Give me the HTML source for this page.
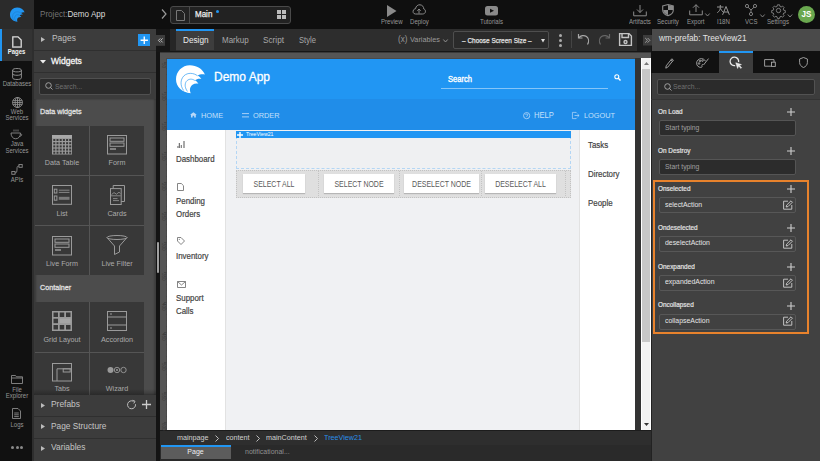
<!DOCTYPE html>
<html><head><meta charset="utf-8">
<style>
*{box-sizing:border-box;margin:0;padding:0}
html,body{width:820px;height:461px;overflow:hidden;background:#141414;font-family:"Liberation Sans",sans-serif}
.a{position:absolute}
.t{position:absolute;white-space:nowrap;line-height:1}
svg{position:absolute;overflow:visible}
</style></head><body>
<!-- TOP BAR -->
<div class="a" style="left:0;top:0;width:820px;height:29px;background:#0f0f0f"></div>
<div class="a" style="left:0;top:0;width:34px;height:29px;background:#2b2b2b"></div>
<div class="t" style="left:40px;top:10.3px;font-size:8.91px;color:#747474;transform:scaleX(0.91);transform-origin:0 0">Project:<span style="color:#dadada">Demo App</span></div>


<!-- TOPBAR CONTENT -->
<svg style="left:9.5px;top:7.3px" width="15" height="15" viewBox="0 0 100 100"><path fill="#2196f3" d="M 98 36 C 90 16 70 4 47 4 C 21 4 0 25 0 52 C 0 77 20 97 50 99 C 45 88 47 76 56 70 C 62 66 70 65 76 67 C 72 60 68 57 64 56 C 70 51 78 49 86 51 C 82 44 77 41 73 40 C 80 35 90 34 98 36 Z"/><path fill="none" stroke="#1d75c0" stroke-width="3" d="M 73 40 C 60 30 40 28 27 40 C 14 53 14 74 26 90 M 64 56 C 54 49 42 50 35 59 C 28 69 31 83 39 93"/></svg>
<svg style="left:161px;top:9px" width="6" height="10" viewBox="0 0 6 10"><path d="M1 0.5 L5 5 L1 9.5" fill="none" stroke="#9a9a9a" stroke-width="1.2"/></svg>
<div class="a" style="left:170px;top:6px;width:121px;height:18px;border:1px solid #4a4a4a;border-radius:3px;background:#222"></div>
<div class="a" style="left:189px;top:7px;width:1px;height:16px;background:#4a4a4a"></div>
<svg style="left:176px;top:10px" width="9" height="11" viewBox="0 0 9 11"><path d="M0.5 0.5 H5.5 L8.5 3.5 V10.5 H0.5 Z" fill="none" stroke="#777" stroke-width="1"/></svg>
<div class="t" style="left:195px;top:10.32px;font-size:8.80px;-webkit-text-stroke:0.25px #eee;color:#eee;transform:scaleX(0.91);transform-origin:0 0">Main</div>
<div class="a" style="left:216px;top:10px;width:3px;height:3px;border-radius:50%;background:#2196f3"></div>
<div class="a" style="left:277px;top:10px;width:4px;height:4px;background:#bbb"></div>
<div class="a" style="left:282px;top:10px;width:4px;height:4px;background:#bbb"></div>
<div class="a" style="left:277px;top:15px;width:4px;height:4px;background:#bbb"></div>
<div class="a" style="left:282px;top:15px;width:4px;height:4px;background:#bbb"></div>

<svg style="left:387px;top:5px" width="10" height="12" viewBox="0 0 10 12"><path d="M0 0 L9.5 6 L0 12 Z" fill="#8a8a8a"/></svg>
<div class="t" style="left:380.8px;top:18.9px;font-size:6.9px;color:#979797;transform:scaleX(0.88);transform-origin:0 0">Preview</div>
<svg style="left:412px;top:4px" width="14" height="11" viewBox="0 0 14 11"><path d="M3.5 10 C1 10 0.6 7.5 1.5 6 C2 5 3 4.8 3.5 4.8 C3.8 2 6 0.6 8 0.8 C10.5 1 11.8 3 11.8 5 C13 5.3 13.6 6.5 13.4 7.8 C13.2 9.2 12 10 10.5 10 Z M7 9.5 V5 M5.3 6.7 L7 5 L8.7 6.7" fill="none" stroke="#8a8a8a" stroke-width="1"/></svg>
<div class="t" style="left:409.8px;top:18.9px;font-size:6.9px;color:#979797;transform:scaleX(0.88);transform-origin:0 0">Deploy</div>
<svg style="left:485px;top:6px" width="13" height="10" viewBox="0 0 13 10"><rect x="0" y="0" width="13" height="9.5" rx="2.5" fill="#8a8a8a"/><path d="M5 2.8 L9 4.8 L5 6.8 Z" fill="#0f0f0f"/></svg>
<div class="t" style="left:480px;top:18.9px;font-size:6.9px;color:#979797;transform:scaleX(0.88);transform-origin:0 0">Tutorials</div>

<svg style="left:633px;top:5px" width="14" height="12" viewBox="0 0 14 12"><path d="M7 0 V7.5 M4 4.5 L7 7.5 L10 4.5 M0.7 6.5 V10.8 H13.3 V6.5" fill="none" stroke="#8a8a8a" stroke-width="1"/></svg>
<div class="t" style="left:629px;top:18.9px;font-size:6.9px;color:#979797;transform:scaleX(0.88);transform-origin:0 0">Artifacts</div>
<svg style="left:662px;top:4px" width="12" height="12" viewBox="0 0 12 12"><path d="M6 0.5 L11.3 2 V6 C11.3 8.8 9 10.8 6 11.6 C3 10.8 0.7 8.8 0.7 6 V2 Z" fill="none" stroke="#8a8a8a" stroke-width="1.1"/><path d="M6 1 V6 H11 V2 Z M6 6 V11 C3.5 10.3 1.2 8.5 1.2 6 Z" fill="#8a8a8a"/></svg>
<div class="t" style="left:657.2px;top:18.9px;font-size:6.9px;color:#979797;transform:scaleX(0.88);transform-origin:0 0">Security</div>
<svg style="left:689px;top:4px" width="14" height="12" viewBox="0 0 14 12"><path d="M7 8 V0.7 M4 3.7 L7 0.7 L10 3.7 M0.7 6.5 V10.8 H13.3 V6.5" fill="none" stroke="#8a8a8a" stroke-width="1"/></svg>
<svg style="left:705px;top:13px" width="5" height="4" viewBox="0 0 5 4"><path d="M0.3 0.5 L2.5 3 L4.7 0.5" fill="none" stroke="#8a8a8a" stroke-width="0.9"/></svg>
<div class="t" style="left:687px;top:18.9px;font-size:6.9px;color:#979797;transform:scaleX(0.88);transform-origin:0 0">Export</div>
<svg style="left:716px;top:4px" width="14" height="11" viewBox="0 0 14 11" fill="none" stroke="#979797" stroke-width="1"><path d="M1 3 H7.5 M4.3 1 V3.5 C4.3 6 3 7.5 1.3 8.7 M4.5 4.5 C5 6 6 7.2 7 7.8"/><path d="M6.6 10.8 L10 2.5 L13.4 10.8 M7.8 8 H12.2"/></svg>
<div class="t" style="left:717px;top:18.9px;font-size:6.9px;color:#979797;transform:scaleX(0.88);transform-origin:0 0">I18N</div>
<svg style="left:745px;top:4px" width="12" height="12" viewBox="0 0 12 12"><circle cx="2" cy="2" r="1.6" fill="none" stroke="#8a8a8a" stroke-width="0.9"/><circle cx="10" cy="2" r="1.6" fill="none" stroke="#8a8a8a" stroke-width="0.9"/><circle cx="6" cy="10" r="1.6" fill="none" stroke="#8a8a8a" stroke-width="0.9"/><path d="M3 3.2 L6 6 L9 3.2 M6 6 V8.4" fill="none" stroke="#8a8a8a" stroke-width="0.9"/></svg>
<svg style="left:760px;top:14px" width="5" height="4" viewBox="0 0 5 4"><path d="M0.3 0.5 L2.5 3 L4.7 0.5" fill="none" stroke="#8a8a8a" stroke-width="0.9"/></svg>
<div class="t" style="left:745.4px;top:18.9px;font-size:6.9px;color:#979797;transform:scaleX(0.88);transform-origin:0 0">VCS</div>
<svg style="left:772px;top:4px" width="13" height="13" viewBox="0 0 24 24"><path fill="none" stroke="#8a8a8a" stroke-width="1.6" d="M10 1.5 h4 l0.6 3 l2.3 1 l2.6 -1.7 l2.8 2.8 l-1.7 2.6 l1 2.3 l3 0.6 v4 l-3 0.6 l-1 2.3 l1.7 2.6 l-2.8 2.8 l-2.6 -1.7 l-2.3 1 l-0.6 3 h-4 l-0.6 -3 l-2.3 -1 l-2.6 1.7 l-2.8 -2.8 l1.7 -2.6 l-1 -2.3 l-3 -0.6 v-4 l3 -0.6 l1 -2.3 l-1.7 -2.6 l2.8 -2.8 l2.6 1.7 l2.3 -1 Z"/><circle cx="12" cy="12" r="4" fill="none" stroke="#8a8a8a" stroke-width="1.6"/></svg>
<svg style="left:787px;top:14px" width="6" height="4" viewBox="0 0 5 4"><path d="M0.3 0.5 L2.5 3 L4.7 0.5" fill="none" stroke="#8a8a8a" stroke-width="0.9"/></svg>
<div class="t" style="left:767.3px;top:18.9px;font-size:6.9px;color:#979797;transform:scaleX(0.88);transform-origin:0 0">Settings</div>
<div class="a" style="left:798px;top:6px;width:17px;height:17px;border-radius:50%;background:#6aa84f"></div>
<div class="t" style="left:798px;top:9.82px;width:17px;text-align:center;font-size:8.80px;font-weight:bold;color:#fff;transform:scaleX(0.91);transform-origin:50% 0">JS</div>

<!-- LEFT NAV -->
<div class="a" style="left:0;top:29px;width:34px;height:432px;background:#111"></div>
<div class="a" style="left:0;top:29px;width:34px;height:32px;background:#333"></div>
<div class="a" style="left:0;top:29px;width:2px;height:32px;background:#2196f3"></div>


<!-- LEFT NAV CONTENT -->
<div class="a" style="left:32px;top:29px;width:2px;height:432px;background:#2e2e2e"></div>
<svg style="left:12px;top:36px" width="10" height="12" viewBox="0 0 10 12"><path d="M0.8 0.8 H6 L9.2 4 V11.2 H0.8 Z" fill="none" stroke="#ddd" stroke-width="1.3"/><path d="M1.5 11 H8.5" stroke="#aaa" stroke-width="1.5"/></svg>
<div class="t" style="left:0;top:49px;width:33px;text-align:center;font-size:6.60px;font-weight:bold;color:#f4f4f4;transform:scaleX(0.91);transform-origin:50% 0">Pages</div>
<svg style="left:12px;top:67.5px" width="10" height="12" viewBox="0 0 10 12" fill="none" stroke="#979797" stroke-width="0.9"><path d="M0.6 2.2 C0.6 1 2.6 0.5 5 0.5 C7.4 0.5 9.4 1 9.4 2.2 V9.8 C9.4 11 7.4 11.5 5 11.5 C2.6 11.5 0.6 11 0.6 9.8 Z M0.6 2.2 C0.6 3.4 2.6 3.9 5 3.9 C7.4 3.9 9.4 3.4 9.4 2.2 M0.6 5.6 C0.6 6.8 2.6 7.3 5 7.3 C7.4 7.3 9.4 6.8 9.4 5.6"/></svg>
<div class="t" style="left:0;top:81px;width:34px;text-align:center;font-size:6.60px;color:#979797;transform:scaleX(0.91);transform-origin:50% 0">Databases</div>
<svg style="left:11.5px;top:97px" width="11" height="11" viewBox="0 0 11 11" fill="none" stroke="#979797" stroke-width="0.8"><circle cx="5.5" cy="5.5" r="5"/><ellipse cx="5.5" cy="5.5" rx="2.4" ry="5"/><path d="M0.8 3.6 H10.2 M0.5 5.5 H10.5 M0.8 7.4 H10.2 M5.5 0.5 V10.5"/></svg>
<div class="t" style="left:0;top:109px;width:34px;text-align:center;font-size:6.60px;color:#979797;line-height:6.4px;transform:scaleX(0.91);transform-origin:50% 0">Web<br>Services</div>
<svg style="left:10px;top:129px" width="13" height="11" viewBox="0 0 13 11"><path d="M4 0.5 V2.5 M6 0.5 V2.5 M8 0.5 V2.5" stroke="#8a8a8a" stroke-width="0.8"/><path d="M1 4 H10.5 C10.5 7.5 8.5 9.8 5.7 9.8 C3 9.8 1 7.5 1 4 Z M10.5 5 C12 5 12.5 6.5 10 7.3" fill="none" stroke="#8a8a8a" stroke-width="0.9"/></svg>
<div class="t" style="left:0;top:141.3px;width:34px;text-align:center;font-size:6.60px;color:#979797;line-height:6.2px;transform:scaleX(0.91);transform-origin:50% 0">Java<br>Services</div>
<svg style="left:11px;top:164px" width="12" height="11" viewBox="0 0 12 11"><rect x="8" y="0.5" width="3.2" height="2.8" fill="none" stroke="#8a8a8a" stroke-width="0.9"/><rect x="0.8" y="7.5" width="3.2" height="2.8" fill="none" stroke="#8a8a8a" stroke-width="0.9"/><path d="M8 2 C6 2 6 3 6 5 C6 8 5.5 9 4 9" fill="none" stroke="#8a8a8a" stroke-width="0.9"/></svg>
<div class="t" style="left:0;top:176.5px;width:34px;text-align:center;font-size:6.60px;color:#979797;transform:scaleX(0.91);transform-origin:50% 0">APIs</div>
<svg style="left:11px;top:375px" width="12" height="9" viewBox="0 0 12 9"><path d="M0.5 0.5 H4.5 L5.5 1.8 H11.5 V8.5 H0.5 Z M0.5 3 H11.5" fill="none" stroke="#8a8a8a" stroke-width="0.9"/></svg>
<div class="t" style="left:0;top:387px;width:34px;text-align:center;font-size:6.60px;color:#979797;line-height:6px;transform:scaleX(0.91);transform-origin:50% 0">File<br>Explorer</div>
<svg style="left:12px;top:408px" width="9" height="11" viewBox="0 0 9 11"><path d="M0.5 0.5 H6 L8.5 3 V10.5 H0.5 Z M2.2 5 H6.8 M2.2 6.8 H6.8 M2.2 8.6 H6.8" fill="none" stroke="#8a8a8a" stroke-width="0.9"/></svg>
<div class="t" style="left:0;top:422px;width:34px;text-align:center;font-size:6.60px;color:#979797;transform:scaleX(0.91);transform-origin:50% 0">Logs</div>
<div class="a" style="left:11px;top:446px;width:3px;height:3px;border-radius:50%;background:#8a8a8a"></div>
<div class="a" style="left:15.5px;top:446px;width:3px;height:3px;border-radius:50%;background:#8a8a8a"></div>
<div class="a" style="left:20px;top:446px;width:3px;height:3px;border-radius:50%;background:#8a8a8a"></div>

<!-- LEFT PANEL -->
<div class="a" style="left:34px;top:29px;width:122px;height:432px;background:#3c3c3c"></div>
<div class="a" style="left:34px;top:99px;width:122px;height:296px;background:#4c4c4c;box-shadow:inset 2px 0 2px rgba(0,0,0,0.25), inset -2px 0 2px rgba(0,0,0,0.2)"></div>
<div class="a" style="left:156px;top:29px;width:4px;height:432px;background:#141414"></div>


<!-- LEFT PANEL CONTENT -->
<div class="a" style="left:34px;top:50px;width:122px;height:1px;background:#2f2f2f"></div>
<div class="a" style="left:34px;top:72px;width:122px;height:1px;background:#2f2f2f"></div>
<svg style="left:41px;top:37px" width="4" height="5" viewBox="0 0 4 5"><path d="M0 0 L4 2.5 L0 5 Z" fill="#bbb"/></svg>
<div class="t" style="left:51.5px;top:34.29px;font-size:9.24px;color:#c0c0c0;transform:scaleX(0.91);transform-origin:0 0">Pages</div>
<div class="a" style="left:137.5px;top:33.5px;width:12.5px;height:12.5px;background:#2196f3"></div>
<svg style="left:137.5px;top:33.5px" width="12.5" height="12.5" viewBox="0 0 12 12"><path d="M6 2.5 V9.5 M2.5 6 H9.5" stroke="#fff" stroke-width="1.3"/></svg>

<svg style="left:40px;top:59.5px" width="6" height="4" viewBox="0 0 6 4"><path d="M0 0 H6 L3 3.5 Z" fill="#eee"/></svg>
<div class="t" style="left:51.3px;top:56.3px;font-size:9.5px;color:#f4f4f4;-webkit-text-stroke:0.35px #f4f4f4;transform:scaleX(0.9);transform-origin:0 0">Widgets</div>
<div class="a" style="left:39px;top:78px;width:112px;height:16.5px;background:#2b2b2b;border:1px solid #505050;border-radius:2px"></div>
<svg style="left:45px;top:82px" width="8" height="8" viewBox="0 0 8 8"><circle cx="3.5" cy="3.5" r="2.8" fill="none" stroke="#aaa" stroke-width="0.9"/><path d="M5.5 5.5 L7.5 7.5" stroke="#aaa" stroke-width="0.9"/></svg>
<div class="t" style="left:54.5px;top:83.42px;font-size:7.48px;color:#707070;transform:scaleX(0.91);transform-origin:0 0">Search...</div>
<div class="t" style="left:40.3px;top:107.6px;font-size:8px;color:#e0e0e0;-webkit-text-stroke:0.3px #e0e0e0;transform:scaleX(0.9);transform-origin:0 0">Data widgets</div>
<div class="t" style="left:40.3px;top:283.6px;font-size:8px;color:#e0e0e0;-webkit-text-stroke:0.3px #e0e0e0;transform:scaleX(0.9);transform-origin:0 0">Container</div>

<div class="a" style="left:35px;top:126px;width:54px;height:49px;background:#383838"></div>
<div class="a" style="left:90px;top:126px;width:54px;height:49px;background:#383838"></div>
<div class="a" style="left:35px;top:176px;width:54px;height:49px;background:#383838"></div>
<div class="a" style="left:90px;top:176px;width:54px;height:49px;background:#383838"></div>
<div class="a" style="left:35px;top:226px;width:54px;height:49px;background:#383838"></div>
<div class="a" style="left:90px;top:226px;width:54px;height:49px;background:#383838"></div>
<div class="a" style="left:35px;top:302px;width:54px;height:50px;background:#383838"></div>
<div class="a" style="left:90px;top:302px;width:54px;height:50px;background:#383838"></div>
<div class="a" style="left:35px;top:353px;width:54px;height:42px;background:#383838"></div>
<div class="a" style="left:90px;top:353px;width:54px;height:42px;background:#383838"></div>
<div class="a" style="left:89px;top:126px;width:1px;height:149px;background:#555"></div>
<div class="a" style="left:35px;top:175px;width:109px;height:1px;background:#555"></div>
<div class="a" style="left:35px;top:225px;width:109px;height:1px;background:#555"></div>
<div class="a" style="left:89px;top:302px;width:1px;height:93px;background:#555"></div>
<div class="a" style="left:35px;top:352px;width:109px;height:1px;background:#555"></div>

<div class="t" style="left:35px;top:159.09px;width:54px;text-align:center;font-size:7.92px;color:#ababab;transform:scaleX(0.91);transform-origin:50% 0">Data Table</div>
<div class="t" style="left:90px;top:159.09px;width:54px;text-align:center;font-size:7.92px;color:#ababab;transform:scaleX(0.91);transform-origin:50% 0">Form</div>
<div class="t" style="left:35px;top:209.59px;width:54px;text-align:center;font-size:7.92px;color:#ababab;transform:scaleX(0.91);transform-origin:50% 0">List</div>
<div class="t" style="left:90px;top:209.59px;width:54px;text-align:center;font-size:7.92px;color:#ababab;transform:scaleX(0.91);transform-origin:50% 0">Cards</div>
<div class="t" style="left:35px;top:259.59px;width:54px;text-align:center;font-size:7.92px;color:#ababab;transform:scaleX(0.91);transform-origin:50% 0">Live Form</div>
<div class="t" style="left:90px;top:259.59px;width:54px;text-align:center;font-size:7.92px;color:#ababab;transform:scaleX(0.91);transform-origin:50% 0">Live Filter</div>
<div class="t" style="left:35px;top:335.59px;width:54px;text-align:center;font-size:7.92px;color:#ababab;transform:scaleX(0.91);transform-origin:50% 0">Grid Layout</div>
<div class="t" style="left:90px;top:335.59px;width:54px;text-align:center;font-size:7.92px;color:#ababab;transform:scaleX(0.91);transform-origin:50% 0">Accordion</div>
<div class="t" style="left:35px;top:385.09px;width:54px;text-align:center;font-size:7.92px;color:#ababab;transform:scaleX(0.91);transform-origin:50% 0">Tabs</div>
<div class="t" style="left:90px;top:385.09px;width:54px;text-align:center;font-size:7.92px;color:#ababab;transform:scaleX(0.91);transform-origin:50% 0">Wizard</div>

<!-- data table icon -->
<svg style="left:52px;top:135px" width="20" height="20" viewBox="0 0 20 20"><rect x="0" y="0" width="20" height="19.5" fill="#9a9a9a"/><rect x="0" y="0" width="20" height="3" fill="#a8a8a8"/>
<g fill="#383838">
<rect x="1.3" y="4" width="2" height="2"/><rect x="4.5" y="4" width="2" height="2"/><rect x="7.7" y="4" width="2" height="2"/><rect x="10.9" y="4" width="2" height="2"/><rect x="14.1" y="4" width="2" height="2"/><rect x="17.2" y="4" width="2" height="2"/>
<rect x="1.3" y="7.2" width="2" height="2"/><rect x="4.5" y="7.2" width="2" height="2"/><rect x="7.7" y="7.2" width="2" height="2"/><rect x="10.9" y="7.2" width="2" height="2"/><rect x="14.1" y="7.2" width="2" height="2"/><rect x="17.2" y="7.2" width="2" height="2"/>
<rect x="1.3" y="10.4" width="2" height="2"/><rect x="4.5" y="10.4" width="2" height="2"/><rect x="7.7" y="10.4" width="2" height="2"/><rect x="10.9" y="10.4" width="2" height="2"/><rect x="14.1" y="10.4" width="2" height="2"/><rect x="17.2" y="10.4" width="2" height="2"/>
<rect x="1.3" y="13.6" width="2" height="2"/><rect x="4.5" y="13.6" width="2" height="2"/><rect x="7.7" y="13.6" width="2" height="2"/><rect x="10.9" y="13.6" width="2" height="2"/><rect x="14.1" y="13.6" width="2" height="2"/><rect x="17.2" y="13.6" width="2" height="2"/>
<rect x="1.3" y="16.7" width="2" height="2"/><rect x="4.5" y="16.7" width="2" height="2"/><rect x="7.7" y="16.7" width="2" height="2"/><rect x="10.9" y="16.7" width="2" height="2"/><rect x="14.1" y="16.7" width="2" height="2"/><rect x="17.2" y="16.7" width="2" height="2"/>
</g></svg>
<!-- form icon -->
<svg style="left:107px;top:135px" width="20" height="20" viewBox="0 0 20 20" fill="none" stroke="#9a9a9a" stroke-width="1"><rect x="0.5" y="0.5" width="19" height="18.5"/><rect x="3" y="3" width="14" height="3.3"/><rect x="3" y="8" width="14" height="3.3"/><path d="M3 14 H9" stroke-width="1.5"/></svg>
<!-- list icon -->
<svg style="left:52px;top:185px" width="20" height="20" viewBox="0 0 20 20" fill="none" stroke="#9a9a9a" stroke-width="1"><rect x="0.5" y="0.5" width="19" height="18.8"/><rect x="2.3" y="4.2" width="2.6" height="3.8"/><rect x="2.3" y="11" width="2.6" height="4.2"/><path d="M6.8 5.2 H17.5 M6.8 7.4 H17.5" stroke-width="0.8"/><rect x="6.8" y="11.8" width="10.7" height="3" fill="#7a7a7a" stroke="none"/></svg>
<!-- cards icon -->
<svg style="left:110px;top:185px" width="15" height="20" viewBox="0 0 15 20" fill="none" stroke="#9a9a9a" stroke-width="1"><path d="M3.2 3.5 V0.5 H14.5 V16.5 H11.2"/><rect x="0.5" y="3.6" width="10.7" height="15.9"/><path d="M1.5 9.6 L4 7.6 L6.5 9.2 L9 7.2 L10.5 8.6 M1 10.8 H10.7" stroke-width="0.8"/><path d="M3 13.6 H7.5 M3 15.6 H9" stroke-width="0.8"/></svg>
<!-- live form icon -->
<svg style="left:52px;top:236px" width="20" height="20" viewBox="0 0 20 20" fill="none" stroke="#9a9a9a" stroke-width="1"><rect x="0.5" y="0.5" width="19" height="18.5"/><rect x="3" y="3" width="14" height="3.3"/><rect x="3" y="8" width="14" height="3.3"/><path d="M3 14 H9" stroke-width="1.5"/></svg>
<!-- live filter icon -->
<svg style="left:106px;top:235px" width="22" height="21" viewBox="0 0 22 21" fill="none" stroke="#9a9a9a" stroke-width="1"><ellipse cx="11" cy="2.5" rx="10" ry="2"/><path d="M1 2.5 L8.5 11 V19.5 L13.5 17 V11 L21 2.5"/></svg>
<!-- grid layout icon -->
<svg style="left:52px;top:311px" width="20" height="20" viewBox="0 0 20 20"><rect x="0" y="0" width="20" height="20" fill="#9a9a9a"/><g fill="#383838"><rect x="1.5" y="1.5" width="4.5" height="4.5"/><rect x="7.7" y="1.5" width="4.5" height="4.5"/><rect x="14" y="1.5" width="4.5" height="4.5"/><rect x="1.5" y="7.7" width="4.5" height="4.5"/><rect x="1.5" y="14" width="4.5" height="4.5"/><rect x="7.7" y="14" width="4.5" height="4.5"/><rect x="14" y="14" width="4.5" height="4.5"/></g><rect x="7.7" y="7.7" width="10.8" height="4.5" fill="#a6a6a6"/></svg>
<!-- accordion icon -->
<svg style="left:107px;top:311px" width="20" height="20" viewBox="0 0 20 20" fill="none" stroke="#9a9a9a" stroke-width="1"><rect x="0.5" y="0.5" width="19" height="19"/><path d="M0.5 6 H19.5 M0.5 14 H19.5 M3 3 H5 M3 17 H5"/></svg>
<!-- tabs icon -->
<svg style="left:52px;top:362.5px" width="20" height="18.5" viewBox="0 0 20 18.5" fill="none" stroke="#9a9a9a" stroke-width="1"><rect x="0.5" y="0.5" width="19" height="17.5"/><path d="M5 18 V5.8 H19.5"/><rect x="11.2" y="5.8" width="7" height="3.2"/></svg>
<!-- wizard icon -->
<svg style="left:107px;top:366px" width="20" height="8" viewBox="0 0 20 8"><circle cx="3.5" cy="4" r="3" fill="#9a9a9a"/><circle cx="10" cy="4" r="2.7" fill="none" stroke="#9a9a9a" stroke-width="0.9"/><circle cx="10" cy="4" r="1" fill="#9a9a9a"/><circle cx="16.5" cy="4" r="2.7" fill="none" stroke="#9a9a9a" stroke-width="0.9"/></svg>

<!-- bottom headers -->
<div class="a" style="left:34px;top:395px;width:122px;height:66px;background:#3c3c3c"></div>
<div class="a" style="left:34px;top:389px;width:122px;height:6px;background:linear-gradient(rgba(0,0,0,0),rgba(0,0,0,0.25))"></div>
<div class="a" style="left:34px;top:416px;width:122px;height:1px;background:#2f2f2f"></div>
<div class="a" style="left:34px;top:437.5px;width:122px;height:1px;background:#2f2f2f"></div>
<svg style="left:41px;top:402.5px" width="4" height="5" viewBox="0 0 4 5"><path d="M0 0 L4 2.5 L0 5 Z" fill="#bbb"/></svg>
<svg style="left:41px;top:424px" width="4" height="5" viewBox="0 0 4 5"><path d="M0 0 L4 2.5 L0 5 Z" fill="#bbb"/></svg>
<svg style="left:41px;top:445.5px" width="4" height="5" viewBox="0 0 4 5"><path d="M0 0 L4 2.5 L0 5 Z" fill="#bbb"/></svg>
<div class="t" style="left:51.4px;top:400.39px;font-size:9.24px;color:#c4c4c4;transform:scaleX(0.91);transform-origin:0 0">Prefabs</div>
<div class="t" style="left:51.4px;top:421.90px;font-size:9.13px;color:#c4c4c4;transform:scaleX(0.91);transform-origin:0 0">Page Structure</div>
<div class="t" style="left:51.4px;top:443.39px;font-size:9.24px;color:#c4c4c4;transform:scaleX(0.91);transform-origin:0 0">Variables</div>
<svg style="left:127px;top:400px" width="10" height="10" viewBox="0 0 10 10" fill="none" stroke="#bbb" stroke-width="1"><path d="M8.5 4.2 A4 4 0 1 1 6.5 1.3"/><path d="M5.5 0.3 L8 1.2 L6.8 3.5"/></svg>
<svg style="left:141.5px;top:400px" width="9" height="9" viewBox="0 0 9 9"><path d="M4.5 0 V9 M0 4.5 H9" stroke="#ccc" stroke-width="1.3"/></svg>
<!-- left panel scroll -->
<div class="a" style="left:156.5px;top:241.5px;width:2.5px;height:31px;background:#a0a0a0;border-radius:1px"></div>

<!-- CENTER TOOLBAR -->
<div class="a" style="left:156px;top:29px;width:496px;height:23px;background:#161616"></div>
<div class="a" style="left:170px;top:29px;width:467px;height:22px;background:#2d2d2d"></div>
<div class="a" style="left:170px;top:29px;width:6px;height:22px;background:#262626"></div>
<div class="a" style="left:176px;top:29px;width:38px;height:21px;background:#3d3d3d;border-top:2px solid #2196f3"></div>

<!-- CANVAS -->
<div class="a" style="left:160px;top:52px;width:491px;height:378px;background:#555"></div>
<div class="a" style="left:167px;top:58px;width:468px;height:41px;background:#2196f3"></div>
<div class="a" style="left:167px;top:99px;width:468px;height:31px;background:#208de9"></div>
<div class="a" style="left:167px;top:130px;width:58px;height:301px;background:#fff"></div>
<div class="a" style="left:225px;top:130px;width:1px;height:301px;background:#e2e2e2"></div>
<div class="a" style="left:226px;top:130px;width:353px;height:301px;background:#f0f1f3"></div>
<div class="a" style="left:579px;top:130px;width:1px;height:301px;background:#e2e2e2"></div>
<div class="a" style="left:580px;top:130px;width:55px;height:301px;background:#fff"></div>
<div class="a" style="left:635px;top:58px;width:6px;height:373px;background:#333"></div>
<div class="a" style="left:641px;top:58px;width:10px;height:373px;background:#f3f3f3;border-left:1px solid #fff;border-right:1px solid #fff"></div>

<!-- BOTTOM BAR -->
<div class="a" style="left:160px;top:430px;width:491px;height:15px;background:#2e2e2e;border-top:1px solid #1c1c1c"></div>
<div class="a" style="left:160px;top:445px;width:491px;height:16px;background:#2a2a2a"></div>
<div class="a" style="left:160.8px;top:444.8px;width:70.2px;height:14.5px;background:#5c5c5c;border-top:2px solid #2196f3"></div>


<!-- TOOLBAR CONTENT -->
<svg style="left:156px;top:35px" width="9" height="10.8" viewBox="0 0 9 10.8"><rect x="0" y="0" width="9" height="10.8" fill="#3c3c3c"/><path d="M4.3 3.4 L2.4 5.4 L4.3 7.4 M6.6 3.4 L4.7 5.4 L6.6 7.4" fill="none" stroke="#c8c8c8" stroke-width="0.9"/></svg>
<div class="t" style="left:183px;top:35.81px;font-size:9.02px;color:#ececec;transform:scaleX(0.91);transform-origin:0 0">Design</div>
<div class="t" style="left:221.8px;top:35.82px;font-size:8.80px;color:#a8a8a8;transform:scaleX(0.91);transform-origin:0 0">Markup</div>
<div class="t" style="left:263px;top:35.81px;font-size:9.02px;color:#a8a8a8;transform:scaleX(0.91);transform-origin:0 0">Script</div>
<div class="t" style="left:298.5px;top:35.86px;font-size:8.36px;color:#a8a8a8;transform:scaleX(0.91);transform-origin:0 0">Style</div>
<div class="t" style="left:397.5px;top:35.32px;font-size:8.80px;color:#9a9a9a;transform:scaleX(0.91);transform-origin:0 0">(x)</div>
<div class="t" style="left:410px;top:35.88px;font-size:8.03px;color:#9a9a9a;transform:scaleX(0.91);transform-origin:0 0">Variables</div>
<svg style="left:442.5px;top:38.5px" width="5" height="4" viewBox="0 0 5 4"><path d="M0.3 0.5 L2.5 3 L4.7 0.5" fill="none" stroke="#9a9a9a" stroke-width="0.9"/></svg>
<div class="a" style="left:453px;top:31px;width:96px;height:17.5px;border:1px solid #4e4e4e;border-radius:2px;background:#2a2a2a"></div>
<div class="t" style="left:461.7px;top:37.3px;font-size:7.6px;color:#e4e4e4;-webkit-text-stroke:0.25px #e4e4e4;transform:scaleX(0.85);transform-origin:0 0">– Choose Screen Size –</div>
<svg style="left:541px;top:39px" width="4" height="4" viewBox="0 0 4 4"><path d="M0 0 H4 L2 3.5 Z" fill="#ddd"/></svg>
<div class="a" style="left:558.5px;top:33.5px;width:3.5px;height:3.5px;border-radius:50%;background:#aaa"></div>
<div class="a" style="left:558.5px;top:38.5px;width:3.5px;height:3.5px;border-radius:50%;background:#aaa"></div>
<div class="a" style="left:558.5px;top:43.5px;width:3.5px;height:3.5px;border-radius:50%;background:#aaa"></div>
<div class="a" style="left:571px;top:31px;width:1px;height:17px;background:#444"></div>
<svg style="left:577px;top:33px" width="13" height="12" viewBox="0 0 13 12" fill="none" stroke="#a8a8a8" stroke-width="1.2"><path d="M1.5 1 V5 H5.5"/><path d="M1.8 4.8 C3.5 2.5 7 1.8 9.5 3.5 C12 5.5 12 9 10.5 11.5"/></svg>
<svg style="left:598px;top:33px" width="13" height="12" viewBox="0 0 13 12" fill="none" stroke="#666" stroke-width="1.2"><path d="M11.5 1 V5 H7.5"/><path d="M11.2 4.8 C9.5 2.5 6 1.8 3.5 3.5 C1 5.5 1 9 2.5 11.5"/></svg>
<svg style="left:619px;top:33px" width="13" height="13" viewBox="0 0 13 13" fill="none" stroke="#c4c4c4" stroke-width="1.4"><path d="M0.6 0.6 H10 L12.4 3 V12.4 H0.6 Z"/><path d="M3 0.6 V4.5 H9.5 V0.6"/><circle cx="6.5" cy="9" r="1.5"/></svg>
<div class="a" style="left:637px;top:29px;width:14px;height:22px;background:#1c1c1c"></div>
<svg style="left:643px;top:35px" width="9" height="10.5" viewBox="0 0 9 10.5"><rect width="9" height="10.5" fill="#3c3c3c"/><path d="M2.2 3 L4.5 5.3 L2.2 7.6 M4.6 3 L6.9 5.3 L4.6 7.6" fill="none" stroke="#aaa" stroke-width="0.9"/></svg>

<div class="a" style="left:160px;top:51.5px;width:491px;height:1px;background:#3a3a3a"></div>
<div class="a" style="left:166px;top:58px;width:1px;height:372px;background:#4a4a4a"></div>
<div class="a" style="left:167px;top:57.5px;width:468px;height:1px;background:#4a4a4a"></div>
<div class="a" style="left:164px;top:62px;width:3px;height:1px;background:#454545"></div>
<div class="a" style="left:165.5px;top:68px;width:1.5px;height:1px;background:#454545"></div>
<div class="a" style="left:165.5px;top:74px;width:1.5px;height:1px;background:#454545"></div>
<div class="a" style="left:165.5px;top:80px;width:1.5px;height:1px;background:#454545"></div>
<div class="a" style="left:165.5px;top:86px;width:1.5px;height:1px;background:#454545"></div>
<div class="a" style="left:164px;top:92px;width:3px;height:1px;background:#454545"></div>
<div class="a" style="left:165.5px;top:98px;width:1.5px;height:1px;background:#454545"></div>
<div class="a" style="left:165.5px;top:104px;width:1.5px;height:1px;background:#454545"></div>
<div class="a" style="left:165.5px;top:110px;width:1.5px;height:1px;background:#454545"></div>
<div class="a" style="left:165.5px;top:116px;width:1.5px;height:1px;background:#454545"></div>
<div class="a" style="left:164px;top:122px;width:3px;height:1px;background:#454545"></div>
<div class="a" style="left:165.5px;top:128px;width:1.5px;height:1px;background:#454545"></div>
<div class="a" style="left:165.5px;top:134px;width:1.5px;height:1px;background:#454545"></div>
<div class="a" style="left:165.5px;top:140px;width:1.5px;height:1px;background:#454545"></div>
<div class="a" style="left:165.5px;top:146px;width:1.5px;height:1px;background:#454545"></div>
<div class="a" style="left:164px;top:152px;width:3px;height:1px;background:#454545"></div>
<div class="a" style="left:165.5px;top:158px;width:1.5px;height:1px;background:#454545"></div>
<div class="a" style="left:165.5px;top:164px;width:1.5px;height:1px;background:#454545"></div>
<div class="a" style="left:165.5px;top:170px;width:1.5px;height:1px;background:#454545"></div>
<div class="a" style="left:165.5px;top:176px;width:1.5px;height:1px;background:#454545"></div>
<div class="a" style="left:164px;top:182px;width:3px;height:1px;background:#454545"></div>
<div class="a" style="left:165.5px;top:188px;width:1.5px;height:1px;background:#454545"></div>
<div class="a" style="left:165.5px;top:194px;width:1.5px;height:1px;background:#454545"></div>
<div class="a" style="left:165.5px;top:200px;width:1.5px;height:1px;background:#454545"></div>
<div class="a" style="left:165.5px;top:206px;width:1.5px;height:1px;background:#454545"></div>
<div class="a" style="left:164px;top:212px;width:3px;height:1px;background:#454545"></div>
<div class="a" style="left:165.5px;top:218px;width:1.5px;height:1px;background:#454545"></div>
<div class="a" style="left:165.5px;top:224px;width:1.5px;height:1px;background:#454545"></div>
<div class="a" style="left:165.5px;top:230px;width:1.5px;height:1px;background:#454545"></div>
<div class="a" style="left:165.5px;top:236px;width:1.5px;height:1px;background:#454545"></div>
<div class="a" style="left:164px;top:242px;width:3px;height:1px;background:#454545"></div>
<div class="a" style="left:165.5px;top:248px;width:1.5px;height:1px;background:#454545"></div>
<div class="a" style="left:165.5px;top:254px;width:1.5px;height:1px;background:#454545"></div>
<div class="a" style="left:165.5px;top:260px;width:1.5px;height:1px;background:#454545"></div>
<div class="a" style="left:165.5px;top:266px;width:1.5px;height:1px;background:#454545"></div>
<div class="a" style="left:164px;top:272px;width:3px;height:1px;background:#454545"></div>
<div class="a" style="left:165.5px;top:278px;width:1.5px;height:1px;background:#454545"></div>
<div class="a" style="left:165.5px;top:284px;width:1.5px;height:1px;background:#454545"></div>
<div class="a" style="left:165.5px;top:290px;width:1.5px;height:1px;background:#454545"></div>
<div class="a" style="left:165.5px;top:296px;width:1.5px;height:1px;background:#454545"></div>
<div class="a" style="left:164px;top:302px;width:3px;height:1px;background:#454545"></div>
<div class="a" style="left:165.5px;top:308px;width:1.5px;height:1px;background:#454545"></div>
<div class="a" style="left:165.5px;top:314px;width:1.5px;height:1px;background:#454545"></div>
<div class="a" style="left:165.5px;top:320px;width:1.5px;height:1px;background:#454545"></div>
<div class="a" style="left:165.5px;top:326px;width:1.5px;height:1px;background:#454545"></div>
<div class="a" style="left:164px;top:332px;width:3px;height:1px;background:#454545"></div>
<div class="a" style="left:165.5px;top:338px;width:1.5px;height:1px;background:#454545"></div>
<div class="a" style="left:165.5px;top:344px;width:1.5px;height:1px;background:#454545"></div>
<div class="a" style="left:165.5px;top:350px;width:1.5px;height:1px;background:#454545"></div>
<div class="a" style="left:165.5px;top:356px;width:1.5px;height:1px;background:#454545"></div>
<div class="a" style="left:164px;top:362px;width:3px;height:1px;background:#454545"></div>
<div class="a" style="left:165.5px;top:368px;width:1.5px;height:1px;background:#454545"></div>
<div class="a" style="left:165.5px;top:374px;width:1.5px;height:1px;background:#454545"></div>
<div class="a" style="left:165.5px;top:380px;width:1.5px;height:1px;background:#454545"></div>
<div class="a" style="left:165.5px;top:386px;width:1.5px;height:1px;background:#454545"></div>
<div class="a" style="left:164px;top:392px;width:3px;height:1px;background:#454545"></div>
<div class="a" style="left:165.5px;top:398px;width:1.5px;height:1px;background:#454545"></div>
<div class="a" style="left:165.5px;top:404px;width:1.5px;height:1px;background:#454545"></div>
<div class="a" style="left:165.5px;top:410px;width:1.5px;height:1px;background:#454545"></div>
<div class="a" style="left:165.5px;top:416px;width:1.5px;height:1px;background:#454545"></div>
<div class="a" style="left:164px;top:422px;width:3px;height:1px;background:#454545"></div>
<div class="a" style="left:165.5px;top:428px;width:1.5px;height:1px;background:#454545"></div>
<div class="t" style="left:160.5px;top:62.64px;font-size:4.6px;color:#383838;transform:rotate(90deg);transform-origin:0 0;left:165px">50</div>
<div class="t" style="left:160.5px;top:92.64px;font-size:4.6px;color:#383838;transform:rotate(90deg);transform-origin:0 0;left:165px">100</div>
<div class="t" style="left:160.5px;top:122.64px;font-size:4.6px;color:#383838;transform:rotate(90deg);transform-origin:0 0;left:165px">150</div>
<div class="t" style="left:160.5px;top:152.64px;font-size:4.6px;color:#383838;transform:rotate(90deg);transform-origin:0 0;left:165px">150</div>
<div class="t" style="left:160.5px;top:182.64px;font-size:4.6px;color:#383838;transform:rotate(90deg);transform-origin:0 0;left:165px">200</div>
<div class="t" style="left:160.5px;top:212.64px;font-size:4.6px;color:#383838;transform:rotate(90deg);transform-origin:0 0;left:165px">250</div>
<div class="t" style="left:160.5px;top:242.64px;font-size:4.6px;color:#383838;transform:rotate(90deg);transform-origin:0 0;left:165px">300</div>
<div class="t" style="left:160.5px;top:272.64px;font-size:4.6px;color:#383838;transform:rotate(90deg);transform-origin:0 0;left:165px">350</div>
<div class="t" style="left:160.5px;top:302.64px;font-size:4.6px;color:#383838;transform:rotate(90deg);transform-origin:0 0;left:165px">400</div>
<div class="t" style="left:160.5px;top:332.64px;font-size:4.6px;color:#383838;transform:rotate(90deg);transform-origin:0 0;left:165px">450</div>
<div class="t" style="left:160.5px;top:362.64px;font-size:4.6px;color:#383838;transform:rotate(90deg);transform-origin:0 0;left:165px">500</div>
<div class="t" style="left:160.5px;top:392.64px;font-size:4.6px;color:#383838;transform:rotate(90deg);transform-origin:0 0;left:165px">550</div>
<div class="t" style="left:160.5px;top:422.64px;font-size:4.6px;color:#383838;transform:rotate(90deg);transform-origin:0 0;left:165px">600</div>
<!-- CANVAS CONTENT -->
<svg style="left:176px;top:64.3px" width="29.5" height="29.5" viewBox="0 0 100 100"><path fill="#fff" d="M 98 36 C 90 16 70 4 47 4 C 21 4 0 25 0 52 C 0 77 20 97 50 99 C 45 88 47 76 56 70 C 62 66 70 65 76 67 C 72 60 68 57 64 56 C 70 51 78 49 86 51 C 82 44 77 41 73 40 C 80 35 90 34 98 36 Z"/><path fill="none" stroke="#2196f3" stroke-width="2.2" d="M 73 40 C 60 30 40 28 27 40 C 14 53 14 74 26 90 M 64 56 C 54 49 42 50 35 59 C 28 69 31 83 39 93"/></svg>
<div class="t" style="left:213.5px;top:69.98px;font-size:13.20px;color:#fff;-webkit-text-stroke:0.3px #fff;transform:scaleX(0.91);transform-origin:0 0">Demo App</div>
<div class="t" style="left:448px;top:74.6px;font-size:8.3px;-webkit-text-stroke:0.35px #fff;color:#fff;transform:scaleX(0.91);transform-origin:0 0">Search</div>
<div class="a" style="left:440.5px;top:88px;width:167px;height:1px;background:rgba(255,255,255,0.45)"></div>
<svg style="left:613.5px;top:74px" width="7" height="7" viewBox="0 0 7 7"><circle cx="2.8" cy="2.8" r="2" fill="none" stroke="#fff" stroke-width="1.1"/><path d="M4.3 4.3 L6.5 6.5" stroke="#fff" stroke-width="1.4"/></svg>
<svg style="left:190px;top:112.4px" width="6.8" height="5.6" viewBox="0 0 7 7" preserveAspectRatio="none"><path d="M3.5 0.2 L7 3.3 H6 V7 H4.3 V4.8 H2.7 V7 H1 V3.3 H0 Z" fill="#b8d8f8"/></svg>
<div class="t" style="left:201px;top:112.17px;font-size:8.1px;color:#c5e0fa;transform:scaleX(0.91);transform-origin:0 0">HOME</div>
<svg style="left:242.3px;top:112.8px" width="7" height="4.5" viewBox="0 0 7 4.5"><path d="M0 0.6 H7 M0 3.9 H7" stroke="#b8d8f8" stroke-width="0.9"/></svg>
<div class="t" style="left:253px;top:112.19px;font-size:8.1px;color:#c5e0fa;transform:scaleX(0.91);transform-origin:0 0">ORDER</div>
<svg style="left:523px;top:111.8px" width="7.3" height="7.3" viewBox="0 0 8 8" fill="none" stroke="#b8d8f8" stroke-width="0.9"><circle cx="4" cy="4" r="3.4"/><path d="M2.8 3 C2.8 2 5.2 2 5.2 3.2 C5.2 4.2 4 4 4 5.2"/></svg>
<div class="t" style="left:534px;top:111.46px;font-size:8.36px;color:#c5e0fa;transform:scaleX(0.91);transform-origin:0 0">HELP</div>
<svg style="left:572px;top:112px" width="7.5" height="7" viewBox="0 0 9 9" preserveAspectRatio="none" fill="none" stroke="#b8d8f8" stroke-width="0.9"><path d="M5 1.5 V0.5 H0.5 V8.5 H5 V7.5 M3 4.5 H8.5 M6.5 2.5 L8.5 4.5 L6.5 6.5"/></svg>
<div class="t" style="left:584px;top:112.09px;font-size:8.1px;color:#c5e0fa;transform:scaleX(0.91);transform-origin:0 0">LOGOUT</div>

<svg style="left:176.5px;top:141px" width="8" height="7" viewBox="0 0 8 7" fill="#555"><rect x="0.5" y="5" width="0.9" height="2"/><rect x="1.8" y="2" width="1" height="5"/><rect x="3.8" y="4" width="0.9" height="3"/><rect x="6.5" y="0" width="1" height="7"/></svg>
<div class="t" style="left:176px;top:154.53px;font-size:8.69px;color:#444;-webkit-text-stroke:0.2px #444;transform:scaleX(0.91);transform-origin:0 0">Dashboard</div>
<svg style="left:177px;top:182.8px" width="7" height="8" viewBox="0 0 7 8"><path d="M0.5 0.5 H4.3 L6.5 2.7 V7.5 H0.5 Z" fill="none" stroke="#777" stroke-width="0.9"/></svg>
<div class="t" style="left:176px;top:194.53px;font-size:8.69px;color:#444;-webkit-text-stroke:0.2px #444;line-height:13px;transform:scaleX(0.91);transform-origin:0 0">Pending<br>Orders</div>
<svg style="left:176.5px;top:237px" width="8" height="8" viewBox="0 0 8 8"><path d="M0.5 0.5 H4 L7.5 4 L4 7.5 L0.5 4 Z" fill="none" stroke="#777" stroke-width="0.9"/><circle cx="2.3" cy="2.3" r="0.6" fill="#777"/></svg>
<div class="t" style="left:176px;top:251.53px;font-size:8.69px;color:#444;-webkit-text-stroke:0.2px #444;transform:scaleX(0.91);transform-origin:0 0">Inventory</div>
<svg style="left:176.5px;top:281px" width="9" height="7" viewBox="0 0 9 7"><path d="M0.5 0.5 H8.5 V6.5 H0.5 Z M0.5 0.5 L4.5 4 L8.5 0.5" fill="none" stroke="#777" stroke-width="0.9"/></svg>
<div class="t" style="left:176px;top:291.53px;font-size:8.69px;color:#444;-webkit-text-stroke:0.2px #444;line-height:13px;transform:scaleX(0.91);transform-origin:0 0">Support<br>Calls</div>

<div class="t" style="left:588px;top:140.53px;font-size:8.69px;color:#444;-webkit-text-stroke:0.2px #444;transform:scaleX(0.91);transform-origin:0 0">Tasks</div>
<div class="t" style="left:588px;top:169.53px;font-size:8.69px;color:#444;-webkit-text-stroke:0.2px #444;transform:scaleX(0.91);transform-origin:0 0">Directory</div>
<div class="t" style="left:588px;top:198.53px;font-size:8.69px;color:#444;-webkit-text-stroke:0.2px #444;transform:scaleX(0.91);transform-origin:0 0">People</div>

<!-- treeview -->
<div class="a" style="left:235.5px;top:131px;width:335px;height:38px;border:1px dashed #b4d6f4;background:#eff0f2"></div>
<div class="a" style="left:235.5px;top:131px;width:335px;height:7px;background:#2196f3"></div>
<svg style="left:237px;top:131.5px" width="6" height="6" viewBox="0 0 6 6"><path d="M3 0 V6 M0 3 H6" stroke="#fff" stroke-width="1.4"/></svg>
<div class="t" style="left:246px;top:131.56px;font-size:5.72px;color:#fff;transform:scaleX(0.91);transform-origin:0 0">TreeView21</div>
<div class="a" style="left:235.5px;top:169.5px;width:335px;height:28px;background:#dfdfdf;border:1px dotted #c2c2c2"></div>
<div class="a" style="left:243px;top:174px;width:62px;height:19px;background:#fff;box-shadow:0 1px 1px rgba(0,0,0,0.18)"></div>
<div class="a" style="left:323.5px;top:174px;width:70px;height:19px;background:#fff;box-shadow:0 1px 1px rgba(0,0,0,0.18)"></div>
<div class="a" style="left:403.5px;top:174px;width:75px;height:19px;background:#fff;box-shadow:0 1px 1px rgba(0,0,0,0.18)"></div>
<div class="a" style="left:484.5px;top:174px;width:71px;height:19px;background:#fff;box-shadow:0 1px 1px rgba(0,0,0,0.18)"></div>
<div class="a" style="left:318px;top:171px;width:0;height:25px;border-left:1px dotted #c4c4c4"></div>
<div class="a" style="left:398.5px;top:171px;width:0;height:25px;border-left:1px dotted #c4c4c4"></div>
<div class="a" style="left:481px;top:171px;width:0;height:25px;border-left:1px dotted #c4c4c4"></div>
<div class="a" style="left:564.5px;top:171px;width:0;height:25px;border-left:1px dotted #c4c4c4"></div>
<div class="t" style="left:243px;top:179.9px;width:62px;text-align:center;font-size:8.5px;color:#5a5a5a;transform:scaleX(0.82);transform-origin:50% 0">SELECT ALL</div>
<div class="t" style="left:323.5px;top:179.9px;width:70px;text-align:center;font-size:8.5px;color:#5a5a5a;transform:scaleX(0.82);transform-origin:50% 0">SELECT NODE</div>
<div class="t" style="left:403.5px;top:179.9px;width:75px;text-align:center;font-size:8.5px;color:#5a5a5a;transform:scaleX(0.82);transform-origin:50% 0">DESELECT NODE</div>
<div class="t" style="left:484.5px;top:179.9px;width:71px;text-align:center;font-size:8.5px;color:#5a5a5a;transform:scaleX(0.82);transform-origin:50% 0">DESELECT ALL</div>

<!-- scrollbar -->
<div class="a" style="left:642px;top:59.5px;width:8px;height:9px;background:#f0f0f0"></div>
<svg style="left:643.5px;top:62px" width="5" height="3" viewBox="0 0 5 3"><path d="M0 3 L2.5 0 L5 3 Z" fill="#777"/></svg>
<div class="a" style="left:642px;top:69px;width:8px;height:273px;background:#c8c8c8"></div>
<svg style="left:643.5px;top:422.5px" width="5" height="3" viewBox="0 0 5 3"><path d="M0 0 L2.5 3 L5 0 Z" fill="#333"/></svg>

<!-- BREADCRUMB -->
<div class="t" style="left:177px;top:434.19px;font-size:7.92px;color:#d0d0d0;transform:scaleX(0.91);transform-origin:0 0">mainpage</div>
<svg style="left:215px;top:434.80px" width="4" height="7" viewBox="0 0 4 7"><path d="M0.5 0.5 L3.5 3.5 L0.5 6.5" fill="none" stroke="#ccc" stroke-width="0.9"/></svg>
<div class="t" style="left:225.5px;top:434.19px;font-size:7.92px;color:#d0d0d0;transform:scaleX(0.91);transform-origin:0 0">content</div>
<svg style="left:256px;top:434.80px" width="4" height="7" viewBox="0 0 4 7"><path d="M0.5 0.5 L3.5 3.5 L0.5 6.5" fill="none" stroke="#ccc" stroke-width="0.9"/></svg>
<div class="t" style="left:266px;top:434.19px;font-size:7.92px;color:#d0d0d0;transform:scaleX(0.91);transform-origin:0 0">mainContent</div>
<svg style="left:314px;top:434.80px" width="4" height="7" viewBox="0 0 4 7"><path d="M0.5 0.5 L3.5 3.5 L0.5 6.5" fill="none" stroke="#ccc" stroke-width="0.9"/></svg>
<div class="t" style="left:323.5px;top:434.19px;font-size:7.92px;color:#2b8fe8;transform:scaleX(0.91);transform-origin:0 0">TreeView21</div>
<div class="t" style="left:160px;top:448.41px;width:71px;text-align:center;font-size:7.70px;color:#f0f0f0;transform:scaleX(0.91);transform-origin:50% 0">Page</div>
<div class="t" style="left:245px;top:448.41px;font-size:7.70px;color:#909090;transform:scaleX(0.91);transform-origin:0 0">notificational...</div>

<!-- RIGHT PANEL -->
<div class="a" style="left:652px;top:29px;width:168px;height:22px;background:#4a4a4a"></div>
<div class="a" style="left:651px;top:51px;width:169px;height:22px;background:#111"></div>
<div class="a" style="left:719px;top:51px;width:34px;height:22px;background:#3d3d3d;border-top:2px solid #2196f3"></div>
<div class="a" style="left:651px;top:73px;width:169px;height:26px;background:#3c3c3c"></div>
<div class="a" style="left:651px;top:99px;width:169px;height:362px;background:#414141"></div>
<div class="a" style="left:651px;top:73px;width:1px;height:388px;background:#222"></div>
<div class="a" style="left:653px;top:180px;width:156px;height:154px;border:2px solid #e8822c"></div>


<!-- RIGHT PANEL CONTENT -->
<div class="t" style="left:659px;top:34.3px;font-size:9.13px;color:#e4e4e4;transform:scaleX(0.91);transform-origin:0 0">wm-prefab: TreeView21</div>
<svg style="left:664.5px;top:57.5px" width="9" height="11" viewBox="0 0 9 11" fill="none" stroke="#aaa" stroke-width="0.9"><path d="M0.8 10.2 L1.2 7.8 L6.8 0.8 L8.4 2.1 L2.8 9.1 Z M5.9 1.9 L7.5 3.2"/></svg>
<svg style="left:696px;top:57.5px" width="13" height="10" viewBox="0 0 13 10" fill="none" stroke="#aaa" stroke-width="0.9"><path d="M9.5 3.2 C8.6 1.5 7 0.6 5.5 0.6 C2.6 0.6 0.6 2.8 0.6 5.2 C0.6 7.6 2.5 9.4 4.8 9.4 C6 9.4 6.3 8.6 6 7.9 C5.6 7 6.3 6.3 7.2 6.4"/><circle cx="3" cy="5.5" r="0.8"/><circle cx="4" cy="3" r="0.8"/><circle cx="6.5" cy="2.6" r="0.8"/><path d="M12.5 0.6 L7.5 7"/></svg>
<svg style="left:730px;top:57px" width="12" height="12" viewBox="0 0 12 12" fill="none" stroke="#e8e8e8" stroke-width="1.3"><path d="M8.6 5.2 A4.3 4.3 0 1 0 5.2 8.6"/><path d="M5.8 5.8 L7.6 11.4 L8.6 9 L11 11.4 L11.6 10.6 L9.4 8.4 L11.4 7.6 Z" fill="#e8e8e8" stroke-width="0.6"/></svg>
<svg style="left:763.5px;top:58.5px" width="12" height="8" viewBox="0 0 12 8" fill="none" stroke="#aaa" stroke-width="0.9"><path d="M7 7.2 H0.6 V0.6 H10 V3"/><rect x="7.5" y="3.2" width="3.8" height="4.2"/></svg>
<svg style="left:799px;top:57px" width="9" height="11" viewBox="0 0 9 11" fill="none" stroke="#aaa" stroke-width="0.9"><path d="M4.5 0.5 L8.4 2 V5.5 C8.4 7.8 6.8 9.6 4.5 10.5 C2.2 9.6 0.6 7.8 0.6 5.5 V2 Z"/></svg>
<div class="a" style="left:657px;top:78.5px;width:158px;height:16px;background:#2b2b2b;border:1px solid #525252;border-radius:2px"></div>
<svg style="left:663.5px;top:82.5px" width="8" height="8" viewBox="0 0 8 8"><circle cx="3.5" cy="3.5" r="2.8" fill="none" stroke="#aaa" stroke-width="0.9"/><path d="M5.5 5.5 L7.5 7.5" stroke="#aaa" stroke-width="0.9"/></svg>
<div class="t" style="left:673px;top:83.42px;font-size:7.48px;color:#707070;transform:scaleX(0.91);transform-origin:0 0">Search...</div>
<div class="a" style="left:651px;top:98.5px;width:169px;height:1px;background:#333"></div>
<div class="t" style="left:658px;top:107.90px;font-size:7.3px;color:#e4e4e4;-webkit-text-stroke:0.2px #e4e4e4;transform:scaleX(0.88);transform-origin:0 0">On Load</div>
<svg style="left:787px;top:108.30px" width="8" height="8" viewBox="0 0 8 8"><path d="M4 0 V8 M0 4 H8" stroke="#cfcfcf" stroke-width="1.1"/></svg>
<div class="a" style="left:658.5px;top:119.7px;width:137px;height:16.5px;background:#2c2c2c;border:1px solid #555;border-radius:2px"></div>
<div class="t" style="left:665px;top:124.12px;font-size:7.48px;color:#a0a0a0;transform:scaleX(0.91);transform-origin:0 0">Start typing</div>
<div class="t" style="left:658px;top:146.90px;font-size:7.3px;color:#e4e4e4;-webkit-text-stroke:0.2px #e4e4e4;transform:scaleX(0.88);transform-origin:0 0">On Destroy</div>
<svg style="left:787px;top:147.30px" width="8" height="8" viewBox="0 0 8 8"><path d="M4 0 V8 M0 4 H8" stroke="#cfcfcf" stroke-width="1.1"/></svg>
<div class="a" style="left:658.5px;top:158.7px;width:137px;height:16.5px;background:#2c2c2c;border:1px solid #555;border-radius:2px"></div>
<div class="t" style="left:665px;top:163.12px;font-size:7.48px;color:#a0a0a0;transform:scaleX(0.91);transform-origin:0 0">Start typing</div>
<div class="t" style="left:658px;top:184.90px;font-size:7.3px;color:#e4e4e4;-webkit-text-stroke:0.2px #e4e4e4;transform:scaleX(0.88);transform-origin:0 0">Onselected</div>
<svg style="left:787px;top:185.30px" width="8" height="8" viewBox="0 0 8 8"><path d="M4 0 V8 M0 4 H8" stroke="#cfcfcf" stroke-width="1.1"/></svg>
<div class="a" style="left:658.5px;top:197.4px;width:137px;height:16px;background:#414141;border:1px solid #575757;border-radius:2px"></div>
<div class="t" style="left:664.5px;top:200.52px;font-size:7.59px;color:#e6e6e6;transform:scaleX(0.91);transform-origin:0 0">selectAction</div>
<svg style="left:783px;top:199.9px" width="10" height="10" viewBox="0 0 10 10" fill="none" stroke="#cfcfcf" stroke-width="0.9"><path d="M5 1.2 H0.6 V9.2 H8.8 V5"/><path d="M3.2 7 L3.6 5.2 L8 0.8 L9.4 2.2 L5 6.6 Z" fill="none"/></svg>
<div class="t" style="left:658px;top:223.70px;font-size:7.3px;color:#e4e4e4;-webkit-text-stroke:0.2px #e4e4e4;transform:scaleX(0.88);transform-origin:0 0">Ondeselected</div>
<svg style="left:787px;top:224.10px" width="8" height="8" viewBox="0 0 8 8"><path d="M4 0 V8 M0 4 H8" stroke="#cfcfcf" stroke-width="1.1"/></svg>
<div class="a" style="left:658.5px;top:236.2px;width:137px;height:16px;background:#414141;border:1px solid #575757;border-radius:2px"></div>
<div class="t" style="left:664.5px;top:239.32px;font-size:7.59px;color:#e6e6e6;transform:scaleX(0.91);transform-origin:0 0">deselectAction</div>
<svg style="left:783px;top:238.7px" width="10" height="10" viewBox="0 0 10 10" fill="none" stroke="#cfcfcf" stroke-width="0.9"><path d="M5 1.2 H0.6 V9.2 H8.8 V5"/><path d="M3.2 7 L3.6 5.2 L8 0.8 L9.4 2.2 L5 6.6 Z" fill="none"/></svg>
<div class="t" style="left:658px;top:262.50px;font-size:7.3px;color:#e4e4e4;-webkit-text-stroke:0.2px #e4e4e4;transform:scaleX(0.88);transform-origin:0 0">Onexpanded</div>
<svg style="left:787px;top:262.90px" width="8" height="8" viewBox="0 0 8 8"><path d="M4 0 V8 M0 4 H8" stroke="#cfcfcf" stroke-width="1.1"/></svg>
<div class="a" style="left:658.5px;top:275.0px;width:137px;height:16px;background:#414141;border:1px solid #575757;border-radius:2px"></div>
<div class="t" style="left:664.5px;top:278.12px;font-size:7.59px;color:#e6e6e6;transform:scaleX(0.91);transform-origin:0 0">expandedAction</div>
<svg style="left:783px;top:277.5px" width="10" height="10" viewBox="0 0 10 10" fill="none" stroke="#cfcfcf" stroke-width="0.9"><path d="M5 1.2 H0.6 V9.2 H8.8 V5"/><path d="M3.2 7 L3.6 5.2 L8 0.8 L9.4 2.2 L5 6.6 Z" fill="none"/></svg>
<div class="t" style="left:658px;top:301.30px;font-size:7.3px;color:#e4e4e4;-webkit-text-stroke:0.2px #e4e4e4;transform:scaleX(0.88);transform-origin:0 0">Oncollapsed</div>
<svg style="left:787px;top:301.70px" width="8" height="8" viewBox="0 0 8 8"><path d="M4 0 V8 M0 4 H8" stroke="#cfcfcf" stroke-width="1.1"/></svg>
<div class="a" style="left:658.5px;top:313.8px;width:137px;height:16px;background:#414141;border:1px solid #575757;border-radius:2px"></div>
<div class="t" style="left:664.5px;top:316.92px;font-size:7.59px;color:#e6e6e6;transform:scaleX(0.91);transform-origin:0 0">collapseAction</div>
<svg style="left:783px;top:316.3px" width="10" height="10" viewBox="0 0 10 10" fill="none" stroke="#cfcfcf" stroke-width="0.9"><path d="M5 1.2 H0.6 V9.2 H8.8 V5"/><path d="M3.2 7 L3.6 5.2 L8 0.8 L9.4 2.2 L5 6.6 Z" fill="none"/></svg>

</body></html>
